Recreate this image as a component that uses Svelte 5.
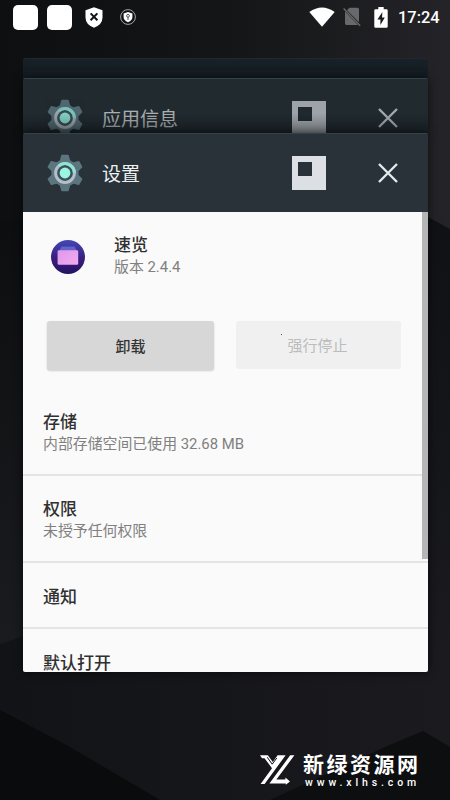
<script>
const stack = [
    { title: "应用信息", dimmed: true },
    { title: "设置", dimmed: false }
];

const rows = [
    { title: "存储", summary: "内部存储空间已使用 32.68 MB", height: 87 },
    { title: "权限", summary: "未授予任何权限", height: 87 },
    { title: "通知", summary: "", height: 66 },
    { title: "默认打开", summary: "", height: 66 }
];

const teeth = [0, 60, 120, 180, 240, 300];
</script>

{#snippet header(title)}
    <div class="task-header">
        <svg class="gear" viewBox="0 0 38 38">
            <g fill="#5c757f">
                {#each teeth as angle}
                    <path d="M13.4 8 L15.2 1.4 Q15.4 .8 16 .8 H22 Q22.6 .8 22.8 1.4 L24.6 8 Z" transform="rotate({angle} 19 19)" />
                {/each}
                <circle cx="19" cy="19" r="13.6" />
            </g>
            <circle cx="19" cy="19" r="9.4" fill="#3c515a" stroke="#b3bfca" stroke-width="3" />
            <path d="M13 11.8A9.4 9.4 0 0 1 28.4 19" fill="none" stroke="#8ce6d8" stroke-width="3" />
            <circle cx="19" cy="19" r="5.4" fill="#9af5e3" />
        </svg>
        <span class="task-title">{title}</span>
        <svg class="pin" viewBox="0 0 34 34">
            <path fill="#dce0e5" fill-rule="evenodd" d="M0 0H34V34H0ZM6 6V20H20V6Z" />
        </svg>
        <svg class="close" viewBox="0 0 20 20">
            <path d="M1 1L19 19M19 1L1 19" stroke="#e4eaed" stroke-width="2.4" />
        </svg>
    </div>
{/snippet}

<div class="screen">
    <!-- wallpaper -->
    <svg class="wallpaper" viewBox="0 0 450 800">
        <defs>
            <linearGradient id="top" x1="0" y1="0" x2="1" y2="0">
                <stop offset="0" stop-color="#0e0f11" />
                <stop offset=".5" stop-color="#141517" />
                <stop offset="1" stop-color="#242428" />
            </linearGradient>
            <linearGradient id="left" x1="0" y1="0" x2="0" y2="1">
                <stop offset="0" stop-color="#0d0e10" />
                <stop offset="1" stop-color="#1a1b1e" />
            </linearGradient>
            <linearGradient id="right" x1="0" y1="0" x2="0" y2="1">
                <stop offset="0" stop-color="#0d0f11" />
                <stop offset="1" stop-color="#1a1a1f" />
            </linearGradient>
            <linearGradient id="bottom" x1="0" y1="0" x2="1" y2="0">
                <stop offset="0" stop-color="#121316" />
                <stop offset="1" stop-color="#1a1a1f" />
            </linearGradient>
        </defs>
        <rect width="450" height="800" fill="#131417" />
        <rect width="450" height="240" fill="url(#top)" />
        <path d="M0 220H225V630L0 644Z" fill="url(#left)" />
        <path d="M225 108L428 217L450 229V660H225Z" fill="url(#right)" />
        <path d="M0 644L30 634L225 660H450V800H0Z" fill="url(#bottom)" />
        <path d="M0 710L70 747L160 800H0Z" fill="#0a0b0c" />
        <path d="M270 800L385 747L423 731L450 747V800Z" fill="#0d0e10" />
    </svg>

    <div class="status">
        <i class="square"></i>
        <i class="square"></i>
        <svg class="shield" viewBox="0 0 18 21">
            <path d="M9 .3L17.5 3.3V10.5Q17.5 17.5 9 20.7Q.5 17.5 .5 10.5V3.3Z" fill="#fff" />
            <path d="M5.6 6.4L12.4 13.2M12.4 6.4L5.6 13.2" stroke="#111214" stroke-width="2" />
        </svg>
        <svg class="badge" viewBox="0 0 16 16">
            <circle cx="8" cy="8" r="7.4" fill="none" stroke="#b4b5b7" stroke-width=".9" />
            <path d="M8 3L12.4 4.5V8Q12.4 11.5 8 13.2Q3.6 11.5 3.6 8V4.5Z" fill="#fff" />
            <circle cx="8" cy="6.8" r="1.4" fill="none" stroke="#333" stroke-width=".8" />
            <path d="M8 8.2V11" stroke="#333" stroke-width=".9" />
        </svg>
        <svg class="wifi" viewBox="0 0 26 20">
            <path d="M.3 5Q13-4.2 25.7 5L13 19.7Z" fill="#fff" />
        </svg>
        <svg class="sim" viewBox="0 0 18 20">
            <path d="M6.4 .8H14.5Q16 .8 16 2.3V15.2L4 3.2ZM2 4.6L15 18H3.4Q2 18 2 16.6Z" fill="#68696b" />
            <path d="M.6 1.5L17.2 18.7" stroke="#68696b" stroke-width="1.4" />
        </svg>
        <svg class="battery" viewBox="0 0 14 21">
            <path d="M4.3 0H9.7V2.2H12.5Q13.7 2.2 13.7 3.4V19.6Q13.7 20.8 12.5 20.8H1.5Q.3 20.8 .3 19.6V3.4Q.3 2.2 1.5 2.2H4.3Z" fill="#fff" />
            <path d="M8.4 5L3.4 12.4H6.4V18L10.8 10.4H8Z" fill="#1b1b1e" />
        </svg>
        <span class="clock">17:24</span>
    </div>

    <div class="recents">
        <div class="sliver"></div>
        {#each stack as task}
            <section class="task" class:dimmed={task.dimmed}>
                {@render header(task.title)}
                {#if !task.dimmed}
                    <div class="page">
                        <div class="app">
                            <svg class="app-icon" viewBox="0 0 34 34">
                                <defs>
                                    <linearGradient id="disc" x1="0" y1="0" x2="0" y2="1">
                                        <stop offset="0" stop-color="#4448b4" />
                                        <stop offset=".5" stop-color="#392080" />
                                        <stop offset="1" stop-color="#251360" />
                                    </linearGradient>
                                    <linearGradient id="folder" x1="0" y1="0" x2="1" y2="1">
                                        <stop offset="0" stop-color="#dd98ec" />
                                        <stop offset="1" stop-color="#f3abee" />
                                    </linearGradient>
                                </defs>
                                <circle cx="17" cy="17" r="17" fill="url(#disc)" />
                                <path d="M10.5 6.5H23.5L26 11H8Z" fill="#6264cc" />
                                <rect x="6.6" y="10.3" width="20.6" height="14.5" rx="1.3" fill="url(#folder)" />
                            </svg>
                            <div>
                                <div class="name">速览</div>
                                <div class="summary">版本 2.4.4</div>
                            </div>
                        </div>
                        <div class="actions">
                            <button class="uninstall">卸载</button>
                            <button class="stop" disabled>强行停止</button>
                        </div>
                        {#each rows as row}
                            <div class="row" style="height: {row.height}px">
                                <div class="name">{row.title}</div>
                                {#if row.summary}
                                    <div class="summary">{row.summary}</div>
                                {/if}
                            </div>
                        {/each}
                        <i class="scrollbar"></i>
                        <i class="speck"></i>
                    </div>
                {/if}
            </section>
        {/each}
    </div>

    <div class="watermark">
        <svg class="mark" viewBox="0 0 35 30">
            <g fill="#fff">
                <path d="M0 .3H7.8L12.8 7L17.6 .3H25.6L4.6 29H.6L12 13.2L4.5 3.2H2Z" />
                <path d="M30.2 .3H34.4L16.4 24.6H25.4V22.4L30 26.6L25.8 29.8V28.6H9.4Z" />
            </g>
            <path d="M7.2 2.2L12.2 9.2L16.8 3" fill="none" stroke="#0d0e10" stroke-width="1" />
        </svg>
        <div>
            <div class="site">新绿资源网</div>
            <div class="url">www.xlhs.com</div>
        </div>
    </div>
</div>

<style>
:global(body) {
    margin: 0;
    background: #101114;
}

.screen {
    position: relative;
    width: 450px;
    height: 800px;
    overflow: hidden;
    font-family: Roboto, "Noto Sans CJK SC", sans-serif;
}

svg {
    display: block;
    flex: none;
}

.wallpaper {
    position: absolute;
    top: 0;
    left: 0;
    width: 450px;
    height: 800px;
}

/* status bar */

.status {
    position: relative;
    display: flex;
    align-items: center;
    box-sizing: border-box;
    height: 34px;
    padding: 0 11px 0 13px;
}

.square {
    width: 25px;
    height: 25px;
    margin-right: 9px;
    border-radius: 5px;
    background: #fff;
}

.shield {
    width: 18px;
    height: 21px;
    margin: 0 17px 0 4px;
}

.badge {
    width: 16px;
    height: 16px;
}

.wifi {
    width: 26px;
    height: 20px;
    margin-left: auto;
}

.sim {
    width: 18px;
    height: 20px;
    margin-left: 8px;
}

.battery {
    width: 14px;
    height: 21px;
    margin: 0 10px 0 13px;
}

.clock {
    width: 41px;
    color: #fff;
    font-size: 16.4px;
    font-weight: 500;
    line-height: 35px;
    white-space: nowrap;
}

/* recents stack */

.recents {
    position: relative;
    width: 405px;
    margin: 24px 0 0 23px;
}

.sliver {
    height: 20px;
    border-top: 1px solid #20292f;
    box-sizing: border-box;
    border-radius: 2px 2px 0 0;
    background: linear-gradient(#192128, #131b22);
}

.task {
    position: relative;
    height: 539px;
    border-radius: 2px;
    background: #283238;
    box-shadow: 0 0 10px rgba(0, 0, 0, .6);
    overflow: hidden;
}

.task.dimmed {
    height: 55px;
    border-radius: 2px 2px 0 0;
    background: #202a2f;
}

.task.dimmed .task-header > * {
    opacity: .67;
}

.task.dimmed .task-header > .gear {
    opacity: .82;
}

.task.dimmed::after {
    content: "";
    position: absolute;
    inset: auto 0 0 0;
    height: 20px;
    background: linear-gradient(transparent, rgba(0, 0, 0, .3));
}

.task-header {
    display: flex;
    align-items: center;
    box-sizing: border-box;
    height: 79px;
    padding: 0 30px 0 23px;
    border-top: 1px solid #34434a;
}

.gear {
    width: 38px;
    height: 38px;
}

.task-title {
    flex: 1;
    margin-left: 18px;
    padding-top: 3px;
    color: #edf1f2;
    font-size: 19px;
    line-height: 28px;
}

.pin {
    width: 34px;
    height: 34px;
    margin-right: 52px;
}

.close {
    width: 20px;
    height: 20px;
}

/* app info page */

.page {
    position: relative;
    height: 460px;
    background: #fafafa;
}

.app {
    display: flex;
    align-items: center;
    height: 87px;
    padding: 0 0 0 28px;
}

.app-icon {
    width: 34px;
    height: 34px;
    margin: 3px 29px 0 0;
}

.name {
    color: #303030;
    font-size: 17px;
    font-weight: 500;
    line-height: 22px;
}

.summary {
    color: #808080;
    font-size: 14.9px;
    line-height: 22px;
    white-space: nowrap;
}

.actions {
    display: flex;
    align-items: flex-start;
    gap: 22px;
    height: 76px;
    padding: 22px 0 0 24px;
    box-sizing: border-box;
    margin-bottom: 14px;
}

.actions button {
    padding: 0 0 1px;
    border: 0;
    border-radius: 3px;
    font-family: inherit;
    font-size: 15px;
    font-weight: 500;
}

.uninstall {
    width: 167px;
    height: 49px;
    background: #d7d7d7;
    color: #333;
    box-shadow: 0 1px 2px rgba(0, 0, 0, .18);
}

.stop {
    width: 165px;
    height: 48px;
    background: #f0f0f0;
    color: #bcbcbc;
}

.actions .stop {
    padding-right: 2px;
    font-weight: 400;
}

.row {
    display: flex;
    flex-direction: column;
    justify-content: center;
    box-sizing: border-box;
    padding: 3px 0 0 20px;
    border-bottom: 2px solid #e4e4e4;
}

.scrollbar {
    position: absolute;
    top: 0;
    right: 0;
    width: 6px;
    height: 347px;
    background: #b5b5b5;
}

.speck {
    position: absolute;
    top: 122px;
    left: 258px;
    width: 1px;
    height: 1px;
    background: #555;
}

/* watermark */

.watermark {
    position: absolute;
    top: 753px;
    left: 260px;
    display: flex;
    gap: 8px;
    color: #fff;
    white-space: nowrap;
}

.mark {
    width: 35px;
    height: 30px;
    margin-top: 2px;
}

.site {
    font-size: 21px;
    font-weight: 700;
    line-height: 25px;
    letter-spacing: 2.5px;
}

.url {
    padding-left: 2px;
    font-size: 10.5px;
    font-weight: 500;
    line-height: 10px;
    letter-spacing: 3.9px;
}
</style>
